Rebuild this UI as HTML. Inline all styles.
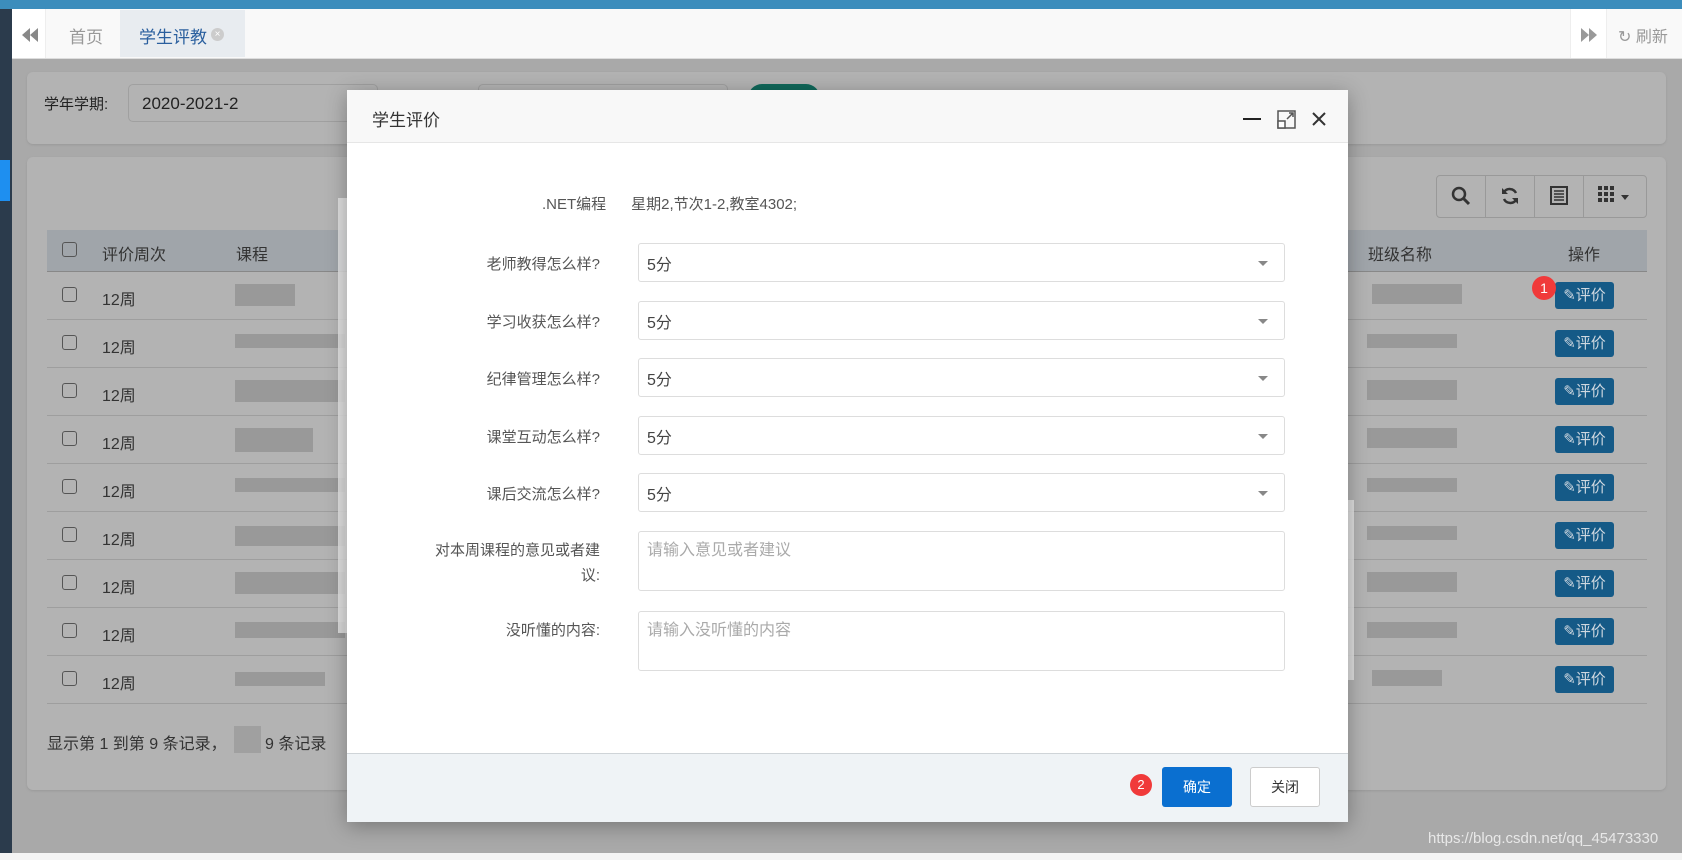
<!DOCTYPE html>
<html><head><meta charset="utf-8"><style>
*{box-sizing:border-box;margin:0;padding:0}
body{width:1682px;height:860px;overflow:hidden;position:relative;background:#a9a9a9;font-family:"Liberation Sans","Noto Sans CJK SC",sans-serif;font-size:15px;color:#333}
.a{position:absolute}
.row{position:absolute;left:47px;width:1600px;height:48px;border-bottom:1px solid #9e9e9e}
.cb{position:absolute;left:15px;top:15px;width:15px;height:15px;border:1px solid #555;border-radius:3px}
.wk{position:absolute;left:55px;top:14px;font-size:16px;color:#333}
.blur{position:absolute;background:#999}
.pj{position:absolute;left:1508px;top:10px;width:59px;height:27px;background:#155a87;border-radius:3px;color:#cfd8e0;font-size:15px;line-height:27px;text-align:center}
.lab{position:absolute;right:1082px;width:260px;text-align:right;color:#555;font-size:15px}
.sel{position:absolute;left:638px;width:647px;height:39px;border:1px solid #ddd;border-radius:3px;background:#fff;font-size:16px;color:#444;padding:7px 8px}
.sel:after{content:"";position:absolute;right:16px;top:17px;border-left:5px solid transparent;border-right:5px solid transparent;border-top:5px solid #888}
.ta{position:absolute;left:638px;width:647px;height:60px;border:1px solid #ddd;border-radius:3px;background:#fff;font-size:16px;color:#aaa;padding:7px 8px}
</style></head><body>
<div class="a" style="left:0;top:0;width:1682px;height:9px;background:#3c8dbc"></div>
<div class="a" style="left:0;top:9px;width:12px;height:851px;background:#2b3b4c"></div>
<div class="a" style="left:0;top:160px;width:10px;height:41px;background:#1e8ff0"></div>
<div class="a" style="left:12px;top:9px;width:1670px;height:50px;background:#f9f9f9;border-bottom:1px solid #ddd"></div>
<div class="a" style="left:12px;top:9px;width:34px;height:49px;background:#fff;border-right:1px solid #eee"></div>
<svg class="a" style="left:22px;top:28px" width="16" height="14"><path d="M8 0L0 7L8 14ZM16 0L8 7L16 14Z" fill="#888"/></svg>
<div class="a" style="left:69px;top:23px;color:#999;font-size:17px">首页</div>
<div class="a" style="left:120px;top:10px;width:125px;height:47px;background:#e8ecf0"></div>
<div class="a" style="left:139px;top:23px;color:#2a5f9e;font-size:17px">学生评教</div>
<div class="a" style="left:211px;top:28px;width:13px;height:13px;border-radius:50%;background:#ccc;color:#fff;font-size:10px;line-height:13px;text-align:center">×</div>
<div class="a" style="left:1570px;top:9px;width:37px;height:49px;background:#fff;border-left:1px solid #eee;border-right:1px solid #eee"></div>
<svg class="a" style="left:1581px;top:28px" width="16" height="14"><path d="M0 0L8 7L0 14ZM8 0L16 7L8 14Z" fill="#999"/></svg>
<div class="a" style="left:1618px;top:23px;color:#999;font-size:16px">&#x21bb; 刷新</div>

<div class="a" style="left:27px;top:72px;width:1639px;height:72px;background:#b3b3b3;border-radius:6px;box-shadow:0 1px 2px #999"></div>
<div class="a" style="left:44px;top:93px;font-size:15px;color:#222">学年学期:</div>
<div class="a" style="left:128px;top:84px;width:250px;height:38px;border:1px solid #a0a0a0;border-radius:5px;background:#b3b3b3;font-size:17px;color:#222;padding:9px 13px">2020-2021-2</div>
<div class="a" style="left:478px;top:84px;width:250px;height:38px;border:1px solid #a0a0a0;border-radius:5px"></div>
<div class="a" style="left:748px;top:84px;width:72px;height:30px;background:#10685a;border-radius:14px"></div>

<div class="a" style="left:27px;top:157px;width:1639px;height:633px;background:#b3b3b3;border-radius:6px;box-shadow:0 1px 2px #999"></div>
<div class="a" style="left:1436px;top:175px;width:211px;height:43px;border:1px solid #999;border-radius:4px"></div>
<div class="a" style="left:1485px;top:175px;width:1px;height:43px;background:#999"></div>
<div class="a" style="left:1534px;top:175px;width:1px;height:43px;background:#999"></div>
<div class="a" style="left:1583px;top:175px;width:1px;height:43px;background:#999"></div>
<svg class="a" style="left:1451px;top:186px" width="20" height="20"><circle cx="8" cy="8" r="6" stroke="#333" stroke-width="2.5" fill="none"/><path d="M12 12L18 18" stroke="#333" stroke-width="3"/></svg>
<svg class="a" style="left:1500px;top:186px" width="20" height="20"><path d="M16 7A7 7 0 0 0 4 6M4 13A7 7 0 0 0 16 14" stroke="#333" stroke-width="2.5" fill="none"/><path d="M2 2L2 8L8 8ZM18 18L18 12L12 12Z" fill="#333"/></svg>
<svg class="a" style="left:1550px;top:186px" width="18" height="19"><rect x="1" y="1" width="16" height="17" stroke="#333" stroke-width="2" fill="none"/><path d="M4 5H14M4 8H14M4 11H14M4 14H14" stroke="#333" stroke-width="1.5"/></svg>
<svg class="a" style="left:1598px;top:186px" width="18" height="17"><g fill="#333"><rect x="0" y="0" width="4" height="4"/><rect x="6" y="0" width="4" height="4"/><rect x="12" y="0" width="4" height="4"/><rect x="0" y="6" width="4" height="4"/><rect x="6" y="6" width="4" height="4"/><rect x="12" y="6" width="4" height="4"/><rect x="0" y="12" width="4" height="4"/><rect x="6" y="12" width="4" height="4"/><rect x="12" y="12" width="4" height="4"/></g></svg>
<div class="a" style="left:1621px;top:195px;border-left:4px solid transparent;border-right:4px solid transparent;border-top:5px solid #333"></div>

<div class="a" style="left:47px;top:230px;width:1600px;height:42px;background:#a0a5aa;border-bottom:1px solid #888"></div>
<div class="a" style="left:62px;top:242px;width:15px;height:15px;border:1px solid #555;border-radius:3px"></div>
<div class="a" style="left:102px;top:241px;font-size:16px;color:#333">评价周次</div>
<div class="a" style="left:236px;top:241px;font-size:16px;color:#333">课程</div>
<div class="a" style="left:1368px;top:241px;font-size:16px;color:#333">班级名称</div>
<div class="a" style="left:1568px;top:241px;font-size:16px;color:#333">操作</div>

<div class="row" style="top:272px"><div class="cb"></div><div class="wk">12周</div><div class="blur" style="left:188px;top:12px;width:60px;height:22px"></div><div class="blur" style="left:1325px;top:12px;width:90px;height:20px"></div><div class="pj">&#x270E;评价</div></div>
<div class="row" style="top:320px"><div class="cb"></div><div class="wk">12周</div><div class="blur" style="left:188px;top:14px;width:110px;height:14px"></div><div class="blur" style="left:1320px;top:14px;width:90px;height:14px"></div><div class="pj">&#x270E;评价</div></div>
<div class="row" style="top:368px"><div class="cb"></div><div class="wk">12周</div><div class="blur" style="left:188px;top:12px;width:110px;height:22px"></div><div class="blur" style="left:1320px;top:12px;width:90px;height:20px"></div><div class="pj">&#x270E;评价</div></div>
<div class="row" style="top:416px"><div class="cb"></div><div class="wk">12周</div><div class="blur" style="left:188px;top:12px;width:78px;height:24px"></div><div class="blur" style="left:1320px;top:12px;width:90px;height:20px"></div><div class="pj">&#x270E;评价</div></div>
<div class="row" style="top:464px"><div class="cb"></div><div class="wk">12周</div><div class="blur" style="left:188px;top:14px;width:110px;height:14px"></div><div class="blur" style="left:1320px;top:14px;width:90px;height:14px"></div><div class="pj">&#x270E;评价</div></div>
<div class="row" style="top:512px"><div class="cb"></div><div class="wk">12周</div><div class="blur" style="left:188px;top:14px;width:110px;height:20px"></div><div class="blur" style="left:1320px;top:14px;width:90px;height:14px"></div><div class="pj">&#x270E;评价</div></div>
<div class="row" style="top:560px"><div class="cb"></div><div class="wk">12周</div><div class="blur" style="left:188px;top:12px;width:110px;height:22px"></div><div class="blur" style="left:1320px;top:12px;width:90px;height:20px"></div><div class="pj">&#x270E;评价</div></div>
<div class="row" style="top:608px"><div class="cb"></div><div class="wk">12周</div><div class="blur" style="left:188px;top:14px;width:110px;height:16px"></div><div class="blur" style="left:1320px;top:14px;width:90px;height:16px"></div><div class="pj">&#x270E;评价</div></div>
<div class="row" style="top:656px"><div class="cb"></div><div class="wk">12周</div><div class="blur" style="left:188px;top:16px;width:90px;height:14px"></div><div class="blur" style="left:1325px;top:14px;width:70px;height:16px"></div><div class="pj">&#x270E;评价</div></div>
<div class="a" style="left:47px;top:730px;font-size:16px;color:#333">显示第 1 到第 9 条记录，</div>
<div class="blur" style="left:234px;top:726px;width:27px;height:27px;background:#a0a0a0"></div>
<div class="a" style="left:265px;top:730px;font-size:16px;color:#333">9 条记录</div>

<div class="a" style="left:1532px;top:276px;width:24px;height:24px;border-radius:50%;background:#f03a3a;color:#fff;font-size:14px;line-height:24px;text-align:center">1</div>

<div class="a" style="left:338px;top:198px;width:12px;height:435px;background:#e8e8e8;opacity:.8"></div>
<div class="a" style="left:1340px;top:500px;width:14px;height:180px;background:#e8e8e8;opacity:.8"></div>

<div class="a" style="left:347px;top:90px;width:1001px;height:732px;background:#fff;box-shadow:0 4px 20px rgba(0,0,0,.3)"></div>
<div class="a" style="left:347px;top:90px;width:1001px;height:53px;background:#f8f8f8;border-bottom:1px solid #e6e6e6"></div>
<div class="a" style="left:372px;top:106px;font-size:17px;color:#333">学生评价</div>
<div class="a" style="left:1243px;top:118px;width:18px;height:2px;background:#222"></div>
<svg class="a" style="left:1277px;top:110px" width="19" height="19"><rect x="1" y="1" width="17" height="17" stroke="#555" stroke-width="1.5" fill="none"/><rect x="1" y="11" width="7" height="7" stroke="#555" stroke-width="1.5" fill="#fff"/><path d="M10 9L16 3M12 3H16V7" stroke="#555" stroke-width="1.5" fill="none"/></svg>
<svg class="a" style="left:1312px;top:112px" width="14" height="14"><path d="M1 1L13 13M13 1L1 13" stroke="#333" stroke-width="2"/></svg>

<div class="a" style="left:542px;top:193px;font-size:15px;color:#555">.NET编程&nbsp;&nbsp;&nbsp;&nbsp;&nbsp;&nbsp;星期2,节次1-2,教室4302;</div>

<div class="lab" style="top:253px">老师教得怎么样?</div><div class="sel" style="top:243px">5分</div>
<div class="lab" style="top:311px">学习收获怎么样?</div><div class="sel" style="top:301px">5分</div>
<div class="lab" style="top:368px">纪律管理怎么样?</div><div class="sel" style="top:358px">5分</div>
<div class="lab" style="top:426px">课堂互动怎么样?</div><div class="sel" style="top:416px">5分</div>
<div class="lab" style="top:483px">课后交流怎么样?</div><div class="sel" style="top:473px">5分</div>
<div class="lab" style="top:538px;line-height:25px">对本周课程的意见或者建<br>议:</div><div class="ta" style="top:531px;padding-top:4px">请输入意见或者建议</div>
<div class="lab" style="top:619px">没听懂的内容:</div><div class="ta" style="top:611px;padding-top:4px">请输入没听懂的内容</div>

<div class="a" style="left:347px;top:753px;width:1001px;height:69px;background:#eff3f6;border-top:1px solid #cfd4d8"></div>
<div class="a" style="left:1130px;top:774px;width:22px;height:22px;border-radius:50%;background:#f03a3a;color:#fff;font-size:13px;line-height:22px;text-align:center">2</div>
<div class="a" style="left:1162px;top:767px;width:70px;height:40px;background:#0a6fd0;border-radius:3px;color:#fff;font-size:14px;line-height:40px;text-align:center">确定</div>
<div class="a" style="left:1250px;top:767px;width:70px;height:40px;background:#fff;border:1px solid #ccc;border-radius:3px;color:#333;font-size:14px;line-height:38px;text-align:center">关闭</div>

<div class="a" style="left:1428px;top:830px;font-size:15px;color:#e8e8e8">https://blog.csdn.net/qq_45473330</div>
<div class="a" style="left:0;top:853px;width:1682px;height:7px;background:#f4f4f4"></div>
</body></html>
